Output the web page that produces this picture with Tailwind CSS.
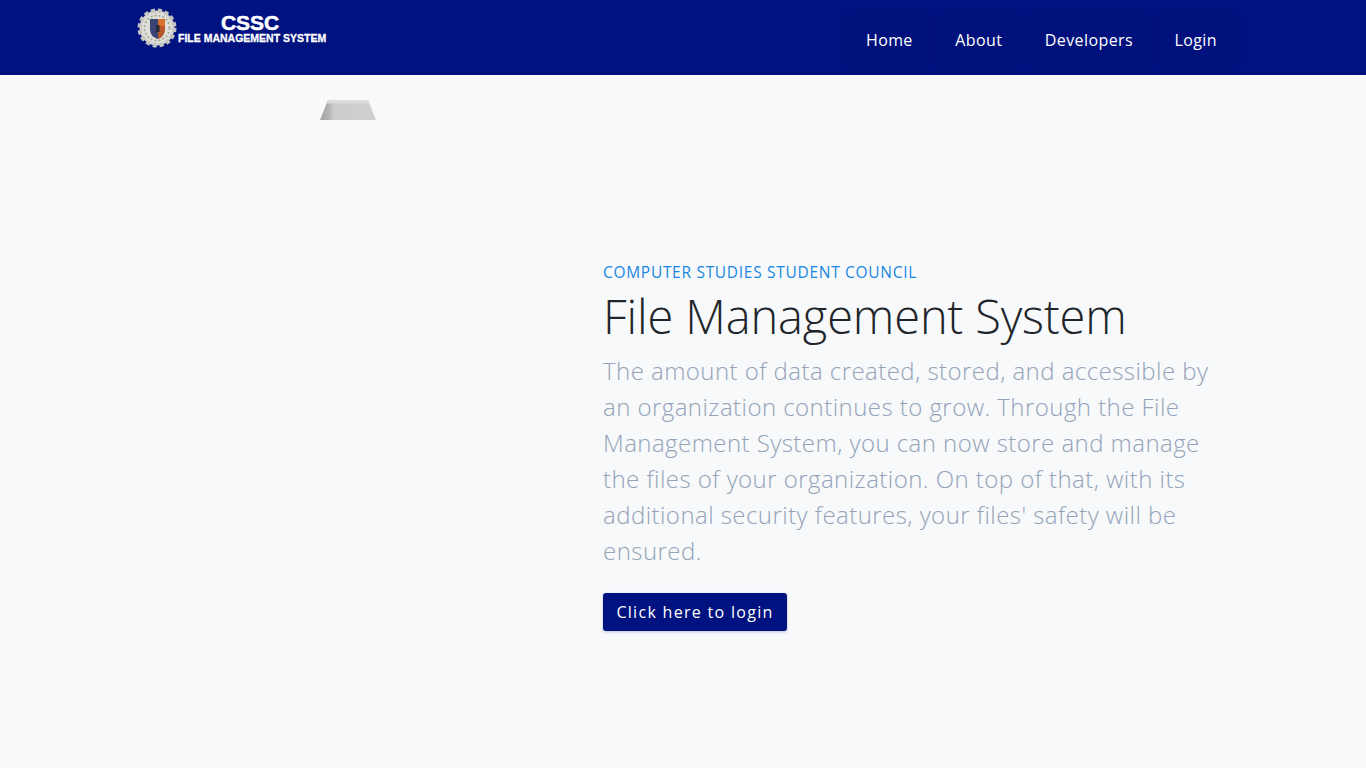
<!DOCTYPE html>
<html lang="en">
<head>
  <meta charset="UTF-8" />
  <meta name="viewport" content="width=device-width, initial-scale=1.0" />
  <title>CSSC File Management System</title>
  <script src="https://cdn.jsdelivr.net/npm/@tailwindcss/browser@4"></script>
</head>
<body class="bg-[#f7f9fb] font-['Open_Sans',sans-serif] h-[768px] overflow-hidden">
  <!-- Navbar -->
  <nav class="h-[75px] bg-[#00127f] flex items-start justify-between pl-[137px] pr-[128px]">
    <div class="flex items-start mt-[8px]">
      <svg class="w-[40px] h-[40px] blur-[0.4px]" viewBox="0 0 40 40">
        <circle cx="20" cy="20" r="17.5" fill="#d4d4cf" stroke="#c4c4c0" stroke-width="4" stroke-dasharray="4 2.9" />
        <circle cx="20" cy="20" r="15" fill="#e0e0db" />
        <circle cx="20" cy="20" r="12.5" fill="none" stroke="#a3ab98" stroke-width="1.8" stroke-dasharray="2 2" />
        <path d="M13 11h8v20c-4-1-8-4-8-10z" fill="#3a4474" />
        <path d="M21 11h7v7h-7z" fill="#d9702e" />
        <path d="M21 18h7v3c0 5-3 9-7 10z" fill="#b5552a" />
        <path d="M19 17h3.5v7H19z" fill="#2a2a38" />
      </svg>
      <div class="ml-[1px] mt-[5px] flex flex-col items-center font-['Liberation_Sans',sans-serif] font-bold text-white">
        <span class="text-[21px] leading-[20px] mr-[4px] [-webkit-text-stroke:0.5px_white]">CSSC</span>
        <span class="text-[10.5px] leading-[11px] whitespace-nowrap [-webkit-text-stroke:0.3px_white]">FILE MANAGEMENT SYSTEM</span>
      </div>
    </div>
    <div class="flex mt-[15px] gap-[2.5px] text-[16px] tracking-[0.4px] text-white">
      <a href="#" class="h-[51px] px-[20px] pb-[2px] flex items-center rounded bg-black/[0.015] shadow-[0_0_3px_rgba(0,0,40,0.14)]">Home</a>
      <a href="#" class="h-[51px] px-[20px] pb-[2px] flex items-center rounded bg-black/[0.015] shadow-[0_0_3px_rgba(0,0,40,0.14)]">About</a>
      <a href="#" class="h-[51px] px-[20px] pb-[2px] flex items-center rounded bg-black/[0.015] shadow-[0_0_3px_rgba(0,0,40,0.14)]">Developers</a>
      <a href="#" class="h-[51px] pl-[19px] pr-[21px] pb-[2px] flex items-center rounded bg-black/[0.015] shadow-[0_0_3px_rgba(0,0,40,0.14)]">Login</a>
    </div>
  </nav>

  <!-- Hero -->
  <main class="flex pl-[113px]">
    <div class="w-[490px] pt-[25px] pl-[207px]">
      <svg class="w-[56px] h-[20px] blur-[0.3px]" viewBox="0 0 56 20">
        <defs>
          <linearGradient id="roof" x1="0" x2="1" y1="0" y2="0">
            <stop offset="0" stop-color="#a4a4a4" />
            <stop offset="0.17" stop-color="#b4b4b4" />
            <stop offset="0.24" stop-color="#cbcbcb" />
            <stop offset="1" stop-color="#d0d0d0" />
          </linearGradient>
        </defs>
        <path d="M8 0h40l8 20H0z" fill="url(#roof)" />
        <path d="M8 0h40l1.4 3.5H7z" fill="#dcdcdc" />
      </svg>
    </div>
    <section class="w-[620px] pt-[187px]">
      <p class="text-[15.5px] leading-[21px] tracking-[0.7px] text-[#1a86e0]">COMPUTER STUDIES STUDENT COUNCIL</p>
      <h1 class="text-[47px] leading-[58px] font-light tracking-[-0.13px] text-[#212529] mt-[4px]">File Management System</h1>
      <p class="text-[24px] leading-[36px] font-light tracking-[0.45px] text-[#94a3b8] mt-[8px]">The amount of data created, stored, and accessible by an organization continues to grow. Through the File Management System, you can now store and manage the files of your organization. On top of that, with its additional security features, your files' safety will be ensured.</p>
      <a href="#" class="inline-flex items-center justify-center w-[184px] h-[38px] mt-[24px] rounded-[3px] bg-[#00127f] text-white text-[16px] tracking-[1.3px] shadow-[0_1px_3px_rgba(0,15,127,0.25)]">Click here to login</a>
    </section>
  </main>
</body>
</html>
